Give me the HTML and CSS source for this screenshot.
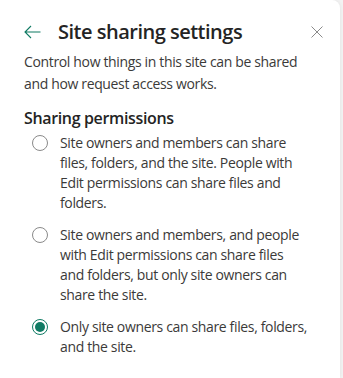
FILE: index.html
```html
<!DOCTYPE html>
<html lang="en">
<head>
    <meta charset="UTF-8">
    <meta name="viewport" content="width=device-width, initial-scale=1.0">
    <title>Site sharing settings</title>
    <link rel="stylesheet" href="styles.css">
</head>
<body>
    <div class="panel">
        <div class="header">
            <button class="back" aria-label="Back">
                <svg width="17" height="14" viewBox="0 0 17 14"><path d="M7 1 L1 7 L7 13 M1 7 H16.5" fill="none" stroke="#0f7a63" stroke-width="1.1"/></svg>
            </button>
            <h1>Site sharing settings</h1>
            <button class="close" aria-label="Close">
                <svg width="12" height="12" viewBox="0 0 12 12"><path d="M0.5 0.5 L11.5 11.5 M11.5 0.5 L0.5 11.5" fill="none" stroke="#8a8a8a" stroke-width="1"/></svg>
            </button>
        </div>
        <p class="desc">Control how things in this site can be shared and how request access works.</p>
        <h2>Sharing permissions</h2>
        <div class="options">
            <label class="option">
                <span class="radio"></span>
                <span>Site owners and members can share files, folders, and the site. People with Edit permissions can share files and folders.</span>
            </label>
            <label class="option">
                <span class="radio"></span>
                <span>Site owners and members, and people with Edit permissions can share files and folders, but only site owners can share the site.</span>
            </label>
            <label class="option">
                <span class="radio checked"></span>
                <span>Only site owners can share files, folders, and the site.</span>
            </label>
        </div>
    </div>
</body>
</html>
```

FILE: styles.css
```css
body {
    margin: 0;
    background-color: #f3f3f3;
    font-family: "Segoe UI", "Open Sans", sans-serif;
    color: #242424;
}
.panel {
    width: 340px;
    height: 378px;
    background: white;
    border-radius: 0 8px 0 0;
    box-shadow: 0 0 4px rgba(0, 0, 0, 0.08);
    box-sizing: border-box;
    padding: 16px 24px 0 24px;
}
.header {
    display: flex;
    align-items: center;
    height: 32px;
}
.header button {
    border: none;
    background: none;
    padding: 0;
    display: flex;
    cursor: pointer;
}
.back {
    margin-right: 17px;
}
h1 {
    flex: 1;
    margin: 0;
    font-size: 20px;
    font-weight: 600;
    line-height: 28px;
    letter-spacing: -0.5px;
}
.close {
    margin-right: -7px;
}
.desc {
    margin: 3px 0 0;
    font-size: 14px;
    line-height: 22px;
    letter-spacing: -0.35px;
    color: #3b3a39;
}
h2 {
    margin: 12px 0 0;
    font-size: 16px;
    font-weight: 600;
    line-height: 22px;
    letter-spacing: -0.35px;
}
.options {
    display: flex;
    flex-direction: column;
    gap: 12px;
    margin-top: 4px;
    padding: 0 8px;
}
.option {
    display: flex;
    gap: 12px;
    font-size: 14px;
    line-height: 20px;
    letter-spacing: -0.35px;
    color: #3b3a39;
}
.radio {
    flex: none;
    width: 16px;
    height: 16px;
    margin-top: 2px;
    border: 1px solid #8a8a8a;
    border-radius: 50%;
    box-sizing: border-box;
    position: relative;
}
.radio.checked {
    border-color: #0f7a63;
}
.radio.checked::after {
    content: "";
    position: absolute;
    left: 2px;
    top: 2px;
    width: 10px;
    height: 10px;
    border-radius: 50%;
    background: #0f7a63;
}
```
